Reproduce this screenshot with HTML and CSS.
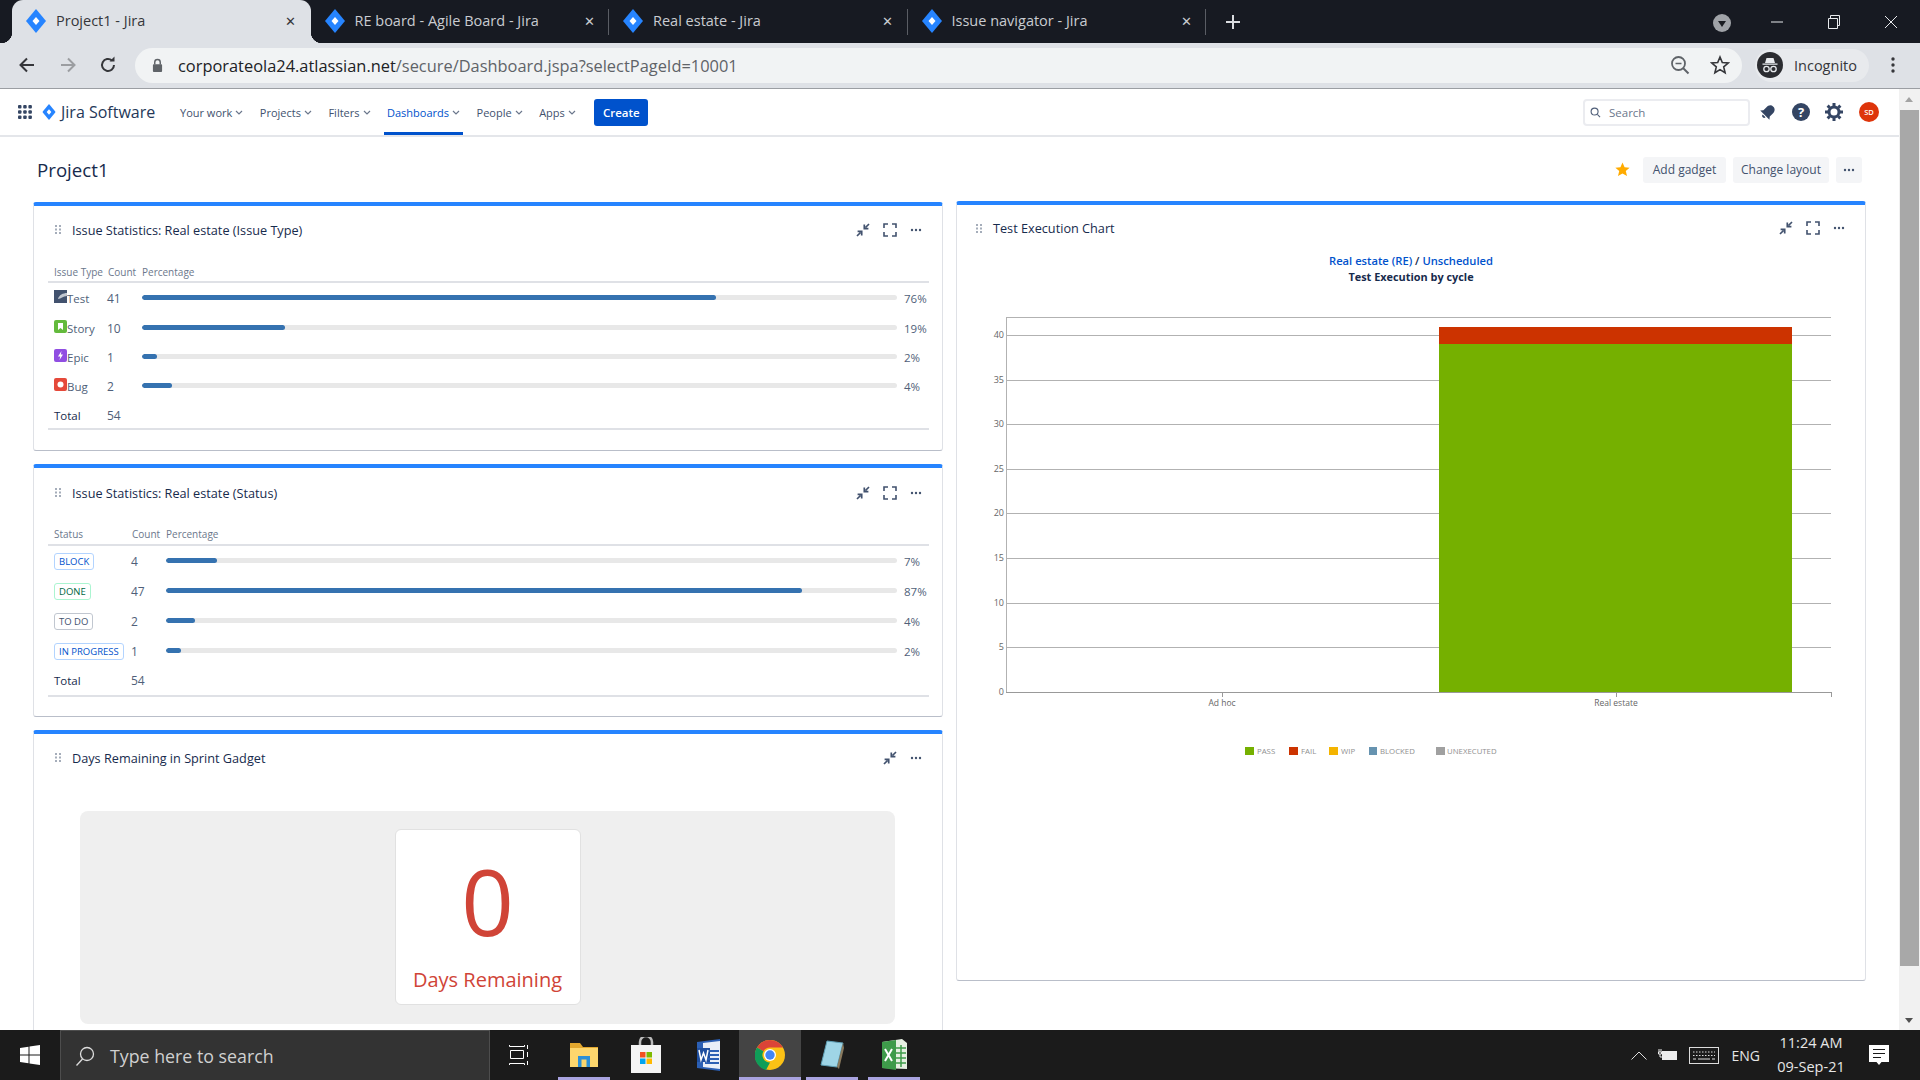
FILE: index.html
```html
<!DOCTYPE html>
<html lang="en">
<head>
<meta charset="utf-8">
<title>Project1 - Jira</title>
<link rel="stylesheet" href="styles.css">
</head>
<body>
<svg class="defs" width="0" height="0" aria-hidden="true">
  <symbol id="diamond" viewBox="0 0 20 24"><path d="M10 0 20 12 10 24 0 12z" fill="#2684ff"/><path d="M10 8 13.5 12 10 16 6.5 12z" fill="#fff"/></symbol>
  <symbol id="shrink" viewBox="0 0 14 14"><path d="M13 1 9.5 4.5M8.3 1.6V5.7H12.4" fill="none" stroke="#42526e" stroke-width="1.7"/><path d="M1 13 4.5 9.5M1.6 8.3H5.7V12.4" fill="none" stroke="#42526e" stroke-width="1.7"/></symbol>
  <symbol id="expand" viewBox="0 0 14 14"><path d="M1 5V1H5M9 1H13V5M13 9V13H9M5 13H1V9" fill="none" stroke="#42526e" stroke-width="1.6"/></symbol>
  <symbol id="dots" viewBox="0 0 12 4"><circle cx="2" cy="2" r="1.2" fill="#42526e"/><circle cx="6" cy="2" r="1.2" fill="#42526e"/><circle cx="10" cy="2" r="1.2" fill="#42526e"/></symbol>
  <symbol id="grip" viewBox="0 0 6 9"><g fill="#a5adba"><rect width="2" height="2"/><rect x="4" width="2" height="2"/><rect y="3.5" width="2" height="2"/><rect x="4" y="3.5" width="2" height="2"/><rect y="7" width="2" height="2"/><rect x="4" y="7" width="2" height="2"/></g></symbol>
  <symbol id="chev" viewBox="0 0 8 5"><path d="M1 1 4 4 7 1" fill="none" stroke="#6b778c" stroke-width="1.2"/></symbol>
</svg>

<div class="app">
  <header class="tabstrip">
    <div class="tab tab-active"><svg class="tab-icon"><use href="#diamond"/></svg><span class="tab-title">Project1 - Jira</span><span class="tab-x">✕</span></div>
    <div class="tab tab-sep"><svg class="tab-icon"><use href="#diamond"/></svg><span class="tab-title">RE board - Agile Board - Jira</span><span class="tab-x">✕</span></div>
    <div class="tab tab-sep"><svg class="tab-icon"><use href="#diamond"/></svg><span class="tab-title">Real estate - Jira</span><span class="tab-x">✕</span></div>
    <div class="tab tab-sep"><svg class="tab-icon"><use href="#diamond"/></svg><span class="tab-title">Issue navigator - Jira</span><span class="tab-x">✕</span></div>
    <svg class="newtab" viewBox="0 0 16 16"><path d="M8 1V15M1 8H15" stroke="#dadce0" stroke-width="2"/></svg>
    <div class="wincontrols">
      <svg class="win-profile" viewBox="0 0 18 18"><circle cx="9" cy="9" r="9" fill="#a0a3a8"/><path d="M5 7H13L9 13z" fill="#1a1c22"/></svg>
      <svg class="win-btn" viewBox="0 0 14 14"><path d="M1 7H13" stroke="#e8eaed" stroke-width="1"/></svg>
      <svg class="win-btn" viewBox="0 0 14 14"><path d="M1.5 3.5H10.5V13.5H1.5zM3.5 3.5V.5H12.5V10.5H10.5" fill="none" stroke="#e8eaed"/></svg>
      <svg class="win-btn" viewBox="0 0 14 14"><path d="M1 1 13 13M13 1 1 13" stroke="#e8eaed"/></svg>
    </div>
  </header>

  <div class="toolbar">
    <svg class="tb-nav" viewBox="0 0 18 18"><path d="M16 9H3M9 2.500 2.500 9 9 15.500" fill="none" stroke="#35363a" stroke-width="2"/></svg>
    <svg class="tb-nav" viewBox="0 0 18 18"><path d="M2 9H15M9 2.500 15.500 9 9 15.500" fill="none" stroke="#9b9da1" stroke-width="2"/></svg>
    <svg class="tb-nav" viewBox="0 0 18 18"><path d="M15 9A6 6 0 1 1 13 4.500" fill="none" stroke="#35363a" stroke-width="2"/><path d="M10.500 5.500H15.500V.5z" fill="#35363a"/></svg>
    <div class="omnibox">
      <svg class="lock" viewBox="0 0 12 16"><path d="M3 7V4.500A3 3 0 0 1 9 4.500V7" fill="none" stroke="#5f6368" stroke-width="1.600"/><rect x="1" y="6.500" width="10" height="8.500" rx="1" fill="#5f6368"/></svg>
      <span class="url"><span class="url-host">corporateola24.atlassian.net</span>/secure/Dashboard.jspa?selectPageId=10001</span>
      <svg class="omni-icon" viewBox="0 0 20 20"><circle cx="8.500" cy="8.500" r="6.500" fill="none" stroke="#5f6368" stroke-width="1.800"/><path d="M13 13 18.500 18.500" stroke="#5f6368" stroke-width="2"/><path d="M5.500 8.500H11.500" stroke="#5f6368" stroke-width="1.500"/></svg>
      <svg class="omni-icon" viewBox="0 0 20 20"><path d="M10 2 12.300 7.500 18.200 8 13.700 11.900 15.100 17.700 10 14.600 4.900 17.700 6.300 11.900 1.800 8 7.700 7.500z" fill="none" stroke="#35363a" stroke-width="1.600"/></svg>
    </div>
    <div class="incognito">
      <svg class="incog-icon" viewBox="0 0 26 26"><circle cx="13" cy="13" r="13" fill="#2b2c30"/><path d="M8 11 9.500 6H16.500L18 11zM5.500 11.500H20.500V12.800H5.500z" fill="#e8eaed"/><circle cx="9.500" cy="17" r="2.700" fill="none" stroke="#e8eaed" stroke-width="1.300"/><circle cx="16.500" cy="17" r="2.700" fill="none" stroke="#e8eaed" stroke-width="1.300"/></svg>
      <span>Incognito</span>
    </div>
    <svg class="tb-menu" viewBox="0 0 4 16"><circle cx="2" cy="2" r="1.700" fill="#35363a"/><circle cx="2" cy="8" r="1.700" fill="#35363a"/><circle cx="2" cy="14" r="1.700" fill="#35363a"/></svg>
  </div>

  <div class="viewport">
    <main class="page">
      <nav class="topnav">
        <svg class="apps" viewBox="0 0 14 14"><g fill="#344563"><rect width="3.500" height="3.500" rx="1"/><rect x="5.200" width="3.500" height="3.500" rx="1"/><rect x="10.400" width="3.500" height="3.500" rx="1"/><rect y="5.200" width="3.500" height="3.500" rx="1"/><rect x="5.200" y="5.200" width="3.500" height="3.500" rx="1"/><rect x="10.400" y="5.200" width="3.500" height="3.500" rx="1"/><rect y="10.400" width="3.500" height="3.500" rx="1"/><rect x="5.200" y="10.400" width="3.500" height="3.500" rx="1"/><rect x="10.400" y="10.400" width="3.500" height="3.500" rx="1"/></g></svg>
        <svg class="logo" viewBox="0 0 20 24"><use href="#diamond"/></svg>
        <span class="brand">Jira Software</span>
        <a class="nav-item">Your work<svg class="chev"><use href="#chev"/></svg></a>
        <a class="nav-item">Projects<svg class="chev"><use href="#chev"/></svg></a>
        <a class="nav-item">Filters<svg class="chev"><use href="#chev"/></svg></a>
        <a class="nav-item nav-current">Dashboards<svg class="chev"><use href="#chev"/></svg></a>
        <a class="nav-item">People<svg class="chev"><use href="#chev"/></svg></a>
        <a class="nav-item">Apps<svg class="chev"><use href="#chev"/></svg></a>
        <button class="create">Create</button>
        <div class="nav-right">
          <div class="search"><svg class="search-icon" viewBox="0 0 12 12"><circle cx="5" cy="5" r="3.800" fill="none" stroke="#505f79" stroke-width="1.200"/><path d="M8 8 11 11" stroke="#505f79" stroke-width="1.200"/></svg><span>Search</span></div>
          <div class="nav-icon"><svg viewBox="0 0 16 16" width="16" height="16"><g transform="rotate(45 8 8)"><path d="M8 0.500C4.800.5 3.500 3 3.500 6V10L1.500 12.500H14.500L12.500 10V6C12.500 3 11.200.5 8 .5z" fill="#344563"/><path d="M6 13.500H10A2 2 0 0 1 6 13.500z" fill="#344563"/></g></svg></div>
          <div class="nav-icon"><svg viewBox="0 0 18 18" width="18" height="18"><circle cx="9" cy="9" r="9" fill="#344563"/><text x="9" y="13.500" text-anchor="middle" class="help-q">?</text></svg></div>
          <div class="nav-icon"><svg viewBox="0 0 18 18" width="18" height="18"><circle cx="9" cy="9" r="5" fill="none" stroke="#344563" stroke-width="3"/><path d="M9 0V3M9 15V18M0 9H3M15 9H18M2.600 2.600 4.800 4.800M13.200 13.200 15.400 15.400M15.400 2.600 13.200 4.800M4.800 13.200 2.600 15.400" stroke="#344563" stroke-width="3"/></svg></div>
          <div class="avatar">SD</div>
        </div>
      </nav>

      <div class="titlebar">
        <h1 class="page-title">Project1</h1>
        <div class="actions">
          <svg class="fav" viewBox="0 0 16 16"><path d="M8 .5 10.200 5.500 15.600 6 11.500 9.600 12.800 15 8 12.200 3.200 15 4.500 9.600.4 6 5.800 5.500z" fill="#ffab00"/></svg>
          <button class="action">Add gadget</button>
          <button class="action">Change layout</button>
          <button class="action action-more"><svg width="12" height="4"><use href="#dots"/></svg></button>
        </div>
      </div>

      <div class="columns">
        <div class="col-left">
          <section class="card card-type">
            <div class="card-head">
              <svg class="grip"><use href="#grip"/></svg><h2>Issue Statistics: Real estate (Issue Type)</h2>
              <div class="card-tools"><svg class="tool"><use href="#shrink"/></svg><svg class="tool"><use href="#expand"/></svg><svg class="tool-dots"><use href="#dots"/></svg></div>
            </div>
            <div class="stat stat-type">
              <div class="stat-row stat-header"><span>Issue Type</span><span>Count</span><span>Percentage</span></div>
              <div class="stat-row"><span class="type"><svg class="itype" viewBox="0 0 13 13"><rect width="13" height="13" fill="#42526e"/><path d="M4 9C5 5 9 3 13 3V6C9 6 7 9 4 9z" fill="#c1c7d0"/></svg>Test</span><span class="num">41</span><span class="barcell"><span class="track"><span class="fill" style="width:76%"></span></span><span class="pct">76%</span></span></div>
              <div class="stat-row"><span class="type"><svg class="itype" viewBox="0 0 13 13"><rect width="13" height="13" rx="2" fill="#63ba3c"/><path d="M4 3H9V10L6.500 8 4 10z" fill="#fff"/></svg>Story</span><span class="num">10</span><span class="barcell"><span class="track"><span class="fill" style="width:19%"></span></span><span class="pct">19%</span></span></div>
              <div class="stat-row"><span class="type"><svg class="itype" viewBox="0 0 13 13"><rect width="13" height="13" rx="2" fill="#904ee2"/><path d="M7.500 2 4 7.500H6.300L5.500 11 9 5.500H6.800z" fill="#fff"/></svg>Epic</span><span class="num">1</span><span class="barcell"><span class="track"><span class="fill" style="width:2%"></span></span><span class="pct">2%</span></span></div>
              <div class="stat-row"><span class="type"><svg class="itype" viewBox="0 0 13 13"><rect width="13" height="13" rx="2" fill="#e5493a"/><circle cx="6.500" cy="6.500" r="3" fill="#fff"/></svg>Bug</span><span class="num">2</span><span class="barcell"><span class="track"><span class="fill" style="width:4%"></span></span><span class="pct">4%</span></span></div>
              <div class="stat-row stat-total"><span>Total</span><span class="num">54</span></div>
            </div>
          </section>

          <section class="card card-status">
            <div class="card-head">
              <svg class="grip"><use href="#grip"/></svg><h2>Issue Statistics: Real estate (Status)</h2>
              <div class="card-tools"><svg class="tool"><use href="#shrink"/></svg><svg class="tool"><use href="#expand"/></svg><svg class="tool-dots"><use href="#dots"/></svg></div>
            </div>
            <div class="stat stat-status">
              <div class="stat-row stat-header"><span>Status</span><span>Count</span><span>Percentage</span></div>
              <div class="stat-row"><span><span class="lozenge loz-blue">BLOCK</span></span><span class="num">4</span><span class="barcell"><span class="track"><span class="fill" style="width:7%"></span></span><span class="pct">7%</span></span></div>
              <div class="stat-row"><span><span class="lozenge loz-green">DONE</span></span><span class="num">47</span><span class="barcell"><span class="track"><span class="fill" style="width:87%"></span></span><span class="pct">87%</span></span></div>
              <div class="stat-row"><span><span class="lozenge loz-grey">TO DO</span></span><span class="num">2</span><span class="barcell"><span class="track"><span class="fill" style="width:4%"></span></span><span class="pct">4%</span></span></div>
              <div class="stat-row"><span><span class="lozenge loz-blue">IN PROGRESS</span></span><span class="num">1</span><span class="barcell"><span class="track"><span class="fill" style="width:2%"></span></span><span class="pct">2%</span></span></div>
              <div class="stat-row stat-total"><span>Total</span><span class="num">54</span></div>
            </div>
          </section>

          <section class="card card-days">
            <div class="card-head">
              <svg class="grip"><use href="#grip"/></svg><h2>Days Remaining in Sprint Gadget</h2>
              <div class="card-tools"><svg class="tool"><use href="#shrink"/></svg><svg class="tool-dots"><use href="#dots"/></svg></div>
            </div>
            <div class="days-panel">
              <div class="days-card">
                <div class="days-num">0</div>
                <div class="days-label">Days Remaining</div>
              </div>
            </div>
          </section>
        </div>

        <section class="card card-chart">
          <div class="card-head card-head-chart">
            <svg class="grip"><use href="#grip"/></svg><h2>Test Execution Chart</h2>
            <div class="card-tools"><svg class="tool"><use href="#shrink"/></svg><svg class="tool"><use href="#expand"/></svg><svg class="tool-dots"><use href="#dots"/></svg></div>
          </div>
          <div class="chart-title">
            <div class="chart-links"><a>Real estate (RE)</a> / <a>Unscheduled</a></div>
            <div class="chart-sub">Test Execution by cycle</div>
          </div>
          <svg class="chart" width="908" height="500" viewBox="0 0 908 500">
            <g class="gridlines">
              <path d="M49 32.500H874M49 50.500H874M49 95.500H874M49 139.500H874M49 184.500H874M49 228.500H874M49 273.500H874M49 318.500H874M49 362.500H874"/>
              <path d="M49.500 32V407"/>
            </g>
            <rect x="482" y="42" width="353" height="17" fill="#cc3300"/>
            <rect x="482" y="59" width="353" height="348" fill="#75b000"/>
            <path class="axis" d="M49 407.500H874M265.500 407V412M659.500 407V412M874.500 407V412"/>
            <g class="ylabels">
              <text x="47" y="53">40</text><text x="47" y="98">35</text><text x="47" y="142">30</text><text x="47" y="187">25</text><text x="47" y="231">20</text><text x="47" y="276">15</text><text x="47" y="321">10</text><text x="47" y="365">5</text><text x="47" y="410">0</text>
            </g>
            <g class="xlabels"><text x="265" y="421">Ad hoc</text><text x="659" y="421">Real estate</text></g>
            <g class="legend">
              <rect x="288" y="462" width="9" height="8" fill="#75b000"/><text x="300" y="469">PASS</text>
              <rect x="332" y="462" width="9" height="8" fill="#cc3300"/><text x="344" y="469">FAIL</text>
              <rect x="372" y="462" width="9" height="8" fill="#f4b400"/><text x="384" y="469">WIP</text>
              <rect x="412" y="462" width="8" height="8" fill="#6693b0"/><text x="423" y="469">BLOCKED</text>
              <rect x="479" y="462" width="9" height="8" fill="#a0a0a0"/><text x="490" y="469">UNEXECUTED</text>
            </g>
          </svg>
        </section>
      </div>
    </main>
    <aside class="scrollbar">
      <span class="sb-up"></span>
      <span class="sb-thumb"></span>
      <span class="sb-down"></span>
    </aside>
  </div>

  <footer class="taskbar">
    <svg class="start" viewBox="0 0 20 20"><path d="M0 3 8.500 1.800V9.500H0zM9.500 1.600 20 0V9.500H9.500zM0 10.500H8.500V18.200L0 17zM9.500 10.500H20V20L9.500 18.400z" fill="#fff"/></svg>
    <div class="tb-search">
      <svg class="tb-search-icon" viewBox="0 0 20 20"><circle cx="12" cy="8" r="6.500" fill="none" stroke="#ddd" stroke-width="1.300"/><path d="M7.500 13 1.500 19.500" stroke="#ddd" stroke-width="1.300"/></svg>
      <span>Type here to search</span>
    </div>
    <div class="tb-apps">
      <div class="tb-app"><svg viewBox="0 0 20 20" width="20" height="20"><path d="M.5 0V1.500H15.500V0M1.500 5.500H14.500V13.500H1.500zM.5 20V18.500H15.500V20M18.500 0V4M18.500 7V12M18.500 16V20" fill="none" stroke="#fff" stroke-width="1"/></svg></div>
      <div class="tb-app tb-open"><svg viewBox="0 0 28 28" width="28" height="28"><path d="M0 2H10L13 6H28V26H0z" fill="#e2a72e"/><rect y="7" width="28" height="19" fill="#fdd66d"/><path d="M8 26V15H20V26H16.500V18.500H11.500V26z" fill="#2c8fd6"/></svg></div>
      <div class="tb-app"><svg viewBox="0 0 30 36" width="30" height="36"><path d="M9 9V5A6 6 0 0 1 21 5V9" fill="none" stroke="#bbb" stroke-width="2.500"/><rect y="8" width="30" height="28" fill="#f4f4f4"/><rect x="9" y="15" width="5.500" height="5.500" fill="#f25022"/><rect x="15.500" y="15" width="5.500" height="5.500" fill="#7fba00"/><rect x="9" y="21.500" width="5.500" height="5.500" fill="#00a4ef"/><rect x="15.500" y="21.500" width="5.500" height="5.500" fill="#ffb900"/></svg></div>
      <div class="tb-app"><svg viewBox="0 0 28 32" width="28" height="32"><path d="M3 3 26 0V32L3 29z" fill="#2b5fb4"/><path d="M9 4 26 2V30L9 28z" fill="#e8eef8"/><path d="M3 9H16V23H3z" fill="#1f4f9f"/><path d="M15 12H25M15 16H25M11 20H25M11 24H25" stroke="#2b5fb4" stroke-width="2"/><path d="M5 11 7 21 9.500 14 12 21 14 11" fill="none" stroke="#fff" stroke-width="1.500"/></svg></div>
      <div class="tb-app tb-active tb-open"><svg viewBox="0 0 30 30" width="30" height="30"><circle cx="15" cy="15" r="15" fill="#fbc116"/><path d="M15 0A15 15 0 0 1 28 7.500H15A7.500 7.500 0 0 0 8.500 11.200L2 7.500A15 15 0 0 1 15 0z" fill="#db4437"/><path d="M2 7.500 8.500 11.200A7.500 7.500 0 0 0 15 22.500L11 30A15 15 0 0 1 2 7.500z" fill="#0f9d58"/><circle cx="15" cy="15" r="6" fill="#fff"/><circle cx="15" cy="15" r="4.700" fill="#4285f4"/></svg></div>
      <div class="tb-app tb-open"><svg viewBox="0 0 26 30" width="26" height="30"><path d="M8 1 24 3 18 27 2 25z" fill="#9fd5e6"/><path d="M8 1 24 3 18 27 2 25z" fill="none" stroke="#5f9fb5"/><path d="M18 27 24 3 25 8 20 29z" fill="#8a7a5e"/></svg></div>
      <div class="tb-app tb-open"><svg viewBox="0 0 28 32" width="28" height="32"><path d="M2 3 22 0 27 4V30L2 29z" fill="#e6f0e2"/><path d="M2 3 16 1V31L2 29z" fill="#3e9b4a"/><path d="M16 9H26M16 14H26M16 19H26M16 24H26M21 6V28" stroke="#3e9b4a" stroke-width="1.500"/><path d="M5 10 12 22M12 10 5 22" stroke="#fff" stroke-width="2"/></svg></div>
    </div>
    <div class="tray">
      <svg class="tray-chevron" viewBox="0 0 16 9"><path d="M.5 8.500 8 1 15.500 8.500" fill="none" stroke="#ddd" stroke-width="1"/></svg>
      <svg class="tray-battery" viewBox="0 0 20 14"><rect x="4" y="3" width="15" height="9" fill="#eee"/><path d="M1 1V4M3 1V4M.5 4H3.500V6H.5zM2 6V9H4" stroke="#eee" fill="none"/></svg>
      <svg class="tray-kbd" viewBox="0 0 30 17"><rect x=".5" y=".5" width="29" height="16" fill="none" stroke="#ddd"/><path d="M4 5H26M4 8.500H26" stroke="#ddd" stroke-dasharray="1.500 1.500"/><path d="M4 12H7M9 12H21M23 12H26" stroke="#ddd"/></svg>
      <span class="tray-lang">ENG</span>
      <div class="clock"><span>11:24 AM</span><span>09-Sep-21</span></div>
      <svg class="tray-notif" viewBox="0 0 20 21"><path d="M0 0H20V17H12.500L10 20 7.500 17H0z" fill="#fff"/><path d="M4 4.500H16M4 8.500H16M4 12.500H12" stroke="#1a1a1a" stroke-width="1.200"/></svg>
    </div>
  </footer>
</div>
</body>
</html>
```
FILE: styles.css
```css
* { box-sizing: border-box; }
html, body { margin: 0; padding: 0; width: 100%; height: 100%; overflow: hidden; }
body { font-family: "Open Sans", "Noto Sans", sans-serif; color: #172b4d; background: #fff; }
.defs { position: absolute; }
.app { width: 1920px; height: 1080px; display: flex; flex-direction: column; overflow: hidden; }

/* browser tabs */
.tabstrip { height: 43px; flex: none; background: #171a22; display: flex; align-items: stretch; padding-left: 12px; }
.tab { width: 298.500px; flex: none; display: flex; align-items: center; padding: 0 13px 2px 14px; color: #c9ccd1; font-size: 14.500px; position: relative; }
.tab-active { background: #dee1e6; color: #35363a; border-radius: 11px 11px 0 0; }
.tab-active::before, .tab-active::after { content: ""; position: absolute; bottom: 0; width: 11px; height: 11px; }
.tab-active::before { left: -11px; background: radial-gradient(circle at 0 0, transparent 11px, #dee1e6 11.500px); }
.tab-active::after { right: -11px; background: radial-gradient(circle at 100% 0, transparent 11px, #dee1e6 11.500px); }
.tab-active .tab-x { color: #35363a; }
.tab-icon { width: 20px; height: 24px; flex: none; margin-right: 10px; }
.tab-title { flex: 1; white-space: nowrap; overflow: hidden; }
.tab-x { font-size: 13px; color: #c9ccd1; width: 14px; text-align: center; }
.tab-sep::after { content: ""; position: absolute; right: 0; top: 9px; width: 1px; height: 26px; background: #5a5d64; }
.newtab { width: 16px; height: 16px; align-self: center; margin-left: 19px; }
.wincontrols { margin-left: auto; display: flex; align-items: center; }
.win-profile { width: 18px; height: 18px; margin-right: 39px; margin-top: 2px; }
.win-btn { width: 14px; height: 14px; margin-right: 43px; }
.win-btn:last-child { margin-right: 22px; }

/* browser toolbar */
.toolbar { height: 46px; flex: none; background: #dee1e6; border-bottom: 1px solid #9b9ea3; display: flex; align-items: center; padding: 0 0 0 18px; }
.tb-nav { width: 18px; height: 18px; flex: none; margin-right: 23px; margin-bottom: 2px; }
.tb-nav:nth-child(2) { margin-right: 22px; }
.tb-nav:nth-child(3) { margin-right: 21px; }
.omnibox { width: 1607px; height: 35px; flex: none; margin-left: -3px; margin-bottom: 1px; border-radius: 18px; background: #f1f3f4; display: flex; align-items: center; padding: 0 12px 0 17px; }
.lock { width: 11px; height: 15px; flex: none; }
.url { margin-left: 15px; font-size: 16.400px; color: #5f6368; white-space: nowrap; flex: 1; }
.url-host { color: #202124; }
.omni-icon { width: 20px; height: 20px; flex: none; margin-left: 20px; }
.incognito { margin-left: 13px; width: 114px; height: 33px; border-radius: 17px; background: #e8eaed; display: flex; align-items: center; padding-left: 2px; font-size: 14.500px; color: #35363a; margin-bottom: 1px; }
.incog-icon { width: 26px; height: 26px; margin-right: 11px; }
.tb-menu { width: 4px; height: 16px; margin-left: 22px; margin-bottom: 1px; }

/* viewport */
.viewport { flex: 1; min-height: 0; display: flex; overflow: hidden; }
.page { flex: 1; min-width: 0; overflow: hidden; background: #fff; }
.scrollbar { width: 21px; flex: none; background: #f1f1f1; display: flex; flex-direction: column; align-items: stretch; }
.sb-up, .sb-down { height: 21px; flex: none; position: relative; }
.sb-up::after, .sb-down::after { content: ""; position: absolute; left: 6px; top: 8px; border-left: 4px solid transparent; border-right: 4px solid transparent; }
.sb-up::after { border-bottom: 5px solid #a3a3a3; }
.sb-down { margin-top: auto; height: 21px; }
.sb-down::after { border-top: 5px solid #505050; top: 9px; }
.sb-thumb { height: 856px; background: #a8a8a8; flex: none; margin: 0 1px; }

/* jira nav */
.topnav { height: 48px; border-bottom: 2px solid #e4e6ea; display: flex; align-items: center; padding-left: 18px; font-size: 11px; color: #42526e; }
.apps { width: 14px; height: 14px; flex: none; }
.logo { width: 14px; height: 16px; margin-left: 10px; flex: none; }
.brand { margin-left: 5px; margin-right: 23px; font-size: 16px; color: #253858; width: 93px; white-space: nowrap; }
.nav-item { height: 46px; padding: 0 3px; margin-right: 10.500px; display: flex; align-items: center; white-space: nowrap; border-bottom: 3px solid transparent; border-top: 3px solid transparent; color: #42526e; }
.nav-current { color: #0052cc; border-bottom-color: #0052cc; }
.chev { width: 8px; height: 5px; margin-left: 3px; }
.create { margin-left: 5px; width: 54px; height: 27px; border: 0; border-radius: 3px; background: #0052cc; color: #fff; font: 600 11.500px "Open Sans", sans-serif; padding: 0; }
.nav-right { margin-left: auto; display: flex; align-items: center; padding-right: 20px; }
.search { width: 167px; height: 27px; border: 2px solid #ebecf0; border-radius: 4px; display: flex; align-items: center; padding-left: 5px; color: #6b778c; margin-right: 1px; font-size: 11.500px; }
.search-icon { width: 11px; height: 11px; margin-right: 8px; }
.nav-icon { width: 33px; display: flex; justify-content: center; align-items: center; }
.help-q { font: 700 13px "Open Sans", sans-serif; fill: #fff; }
.avatar { width: 20px; height: 20px; margin-left: 9px; border-radius: 50%; background: #de350b; color: #fff; font-size: 7.500px; font-weight: 600; display: flex; align-items: center; justify-content: center; }

/* title row */
.titlebar { height: 64px; display: flex; align-items: center; justify-content: space-between; padding: 1px 37px 0; }
.page-title { margin: 0; font-size: 18.700px; font-weight: 500; color: #172b4d; }
.actions { display: flex; align-items: center; gap: 7px; }
.fav { width: 15px; height: 15px; margin-right: 6px; }
.action { height: 26px; border: 0; border-radius: 3px; background: #f4f5f7; color: #42526e; font: 12px "Open Sans", sans-serif; padding: 0; width: 83px; }
.action:nth-of-type(2) { width: 96px; }
.action-more { width: 26px; display: flex; align-items: center; justify-content: center; }

/* columns */
.columns { display: grid; grid-template-columns: 910px 910px; column-gap: 13px; padding-left: 33px; align-items: start; }
.col-left { display: flex; flex-direction: column; gap: 13px; padding-top: 1px; }

/* cards */
.card { background: #fff; border: 1px solid #dfe1e6; border-top: 4px solid #2684ff; border-bottom-color: #b9bec9; border-radius: 3px; }
.card-type { height: 249px; }
.card-status { height: 253px; }
.card-days { height: 320px; }
.card-chart { height: 780px; }
.card-head { height: 51px; display: flex; align-items: center; padding: 0 16px 4px 21px; }
.card-status .card-head { padding-bottom: 2px; }
.card-head-chart { height: 46px; padding: 0 16px 0 19px; }
.card-head h2 { margin: 0 0 0 11px; font-size: 12.700px; font-weight: 500; color: #172b4d; white-space: nowrap; }
.grip { width: 6px; height: 9px; flex: none; }
.card-tools { margin-left: auto; display: flex; align-items: center; }
.tool { width: 14px; height: 14px; margin-right: 13px; }
.tool-dots { width: 12px; height: 4px; margin-left: 0; margin-right: 4px; }

/* statistics tables */
.stat { margin: 0 13px 0 14px; }
.stat-row { display: grid; grid-template-columns: 54px 34px 1fr; padding: 2px 0 0 6px; align-items: center; height: 29.400px; font-size: 11.500px; color: #505f79; }
.stat-status .stat-row { grid-template-columns: 78px 34px 1fr; height: 30px; padding-top: 0; }
.stat-status .stat-header { height: 27px !important; }
.stat-status .stat-total { height: 31px; }
.stat-header { height: 26px !important; border-bottom: 2px solid #dfe1e6; font-size: 10px; color: #6b778c; padding-top: 5px !important; }
.stat-total { border-bottom: 2px solid #dfe1e6; }
.stat-total span:first-child { color: #172b4d; }
.type { display: flex; align-items: center; white-space: nowrap; }
.itype { width: 13px; height: 13px; flex: none; margin-bottom: 4px; }
.num { font-size: 12px; margin-left: -1px; }
.barcell { display: flex; align-items: center; }
.track { flex: 1; height: 5px; background: #e8e8e8; border-radius: 3px; overflow: hidden; margin-bottom: 2px; }
.fill { display: block; height: 100%; background: #3572b0; border-radius: 3px; }
.pct { width: 32px; padding-left: 7px; white-space: nowrap; }
.lozenge { display: inline-block; height: 17px; line-height: 15px; padding: 0 4px; border: 1px solid; border-radius: 3px; font-size: 9.500px; white-space: nowrap; }
.loz-blue { color: #0052cc; border-color: #b3d4ff; }
.loz-green { color: #006644; border-color: #abf5d1; }
.loz-grey { color: #42526e; border-color: #c1c7d0; }

/* days remaining */
.days-panel { margin: 26px 47px 0 46px; height: 213px; background: #efefef; border-radius: 8px; padding-top: 18px; }
.days-card { width: 186px; height: 176px; margin: 0 auto; background: #fff; border: 1px solid #e1e1e1; border-radius: 6px; text-align: center; color: #d04437; }
.days-num { font-size: 92px; line-height: 125px; margin-top: 8px; }
.days-label { font-size: 20px; line-height: 28px; margin-top: 3px; white-space: nowrap; }

/* chart */
.chart-title { height: 32px; margin-top: 2px; text-align: center; font-size: 11.200px; line-height: 16px; color: #172b4d; }
.chart-links { font-weight: 600; }
.chart-title a { color: #0052cc; }
.chart-sub { font-size: 10.900px; font-weight: 700; color: #172b4d; }
.chart { display: block; }
.gridlines path { stroke: #b2b2b2; stroke-width: 1; fill: none; }
.axis { stroke: #999; stroke-width: 1; fill: none; }
.chart text { font-family: "Open Sans", sans-serif; }
.ylabels text { font-size: 9px; fill: #666; text-anchor: end; }
.xlabels text { font-size: 8.500px; fill: #666; text-anchor: middle; }
.legend text { font-size: 7.800px; fill: #909090; }

/* taskbar */
.taskbar { height: 50px; flex: none; background: #1b1b1b; display: flex; align-items: stretch; color: #e6e6e6; }
.start { width: 20px; height: 20px; align-self: center; margin: 0 20px 0 20px; flex: none; }
.tb-search { width: 430px; flex: none; background: #333; border: 1px solid #4d4d4d; border-width: 1px 1px 0; display: flex; align-items: center; padding-left: 14px; font-size: 17.800px; color: #d0d0d0; }
.tb-search-icon { width: 20px; height: 20px; margin-right: 15px; }
.tb-apps { display: flex; margin-left: 0; }
.tb-app { width: 62px; display: flex; align-items: center; justify-content: center; position: relative; }
.tb-app:first-child { margin-right: 5px; width: 58px; }
.tb-active { background: #444; }
.tb-open::after { content: ""; position: absolute; left: 5px; right: 5px; bottom: 0; height: 3px; background: #a9a3e0; }
.tb-active::after { left: 0; right: 0; }
.tray { margin-left: auto; display: flex; align-items: center; padding-right: 31px; }
.tray-chevron { width: 16px; height: 9px; margin-right: 11px; }
.tray-battery { width: 20px; height: 14px; margin-right: 11px; }
.tray-kbd { width: 30px; height: 17px; margin-right: 13px; }
.tray-lang { font-size: 14px; margin-right: 13px; }
.clock { width: 76px; display: flex; flex-direction: column; align-items: center; font-size: 14.500px; line-height: 24px; white-space: nowrap; margin-right: 20px; }
.tray-notif { width: 20px; height: 21px; }
```
